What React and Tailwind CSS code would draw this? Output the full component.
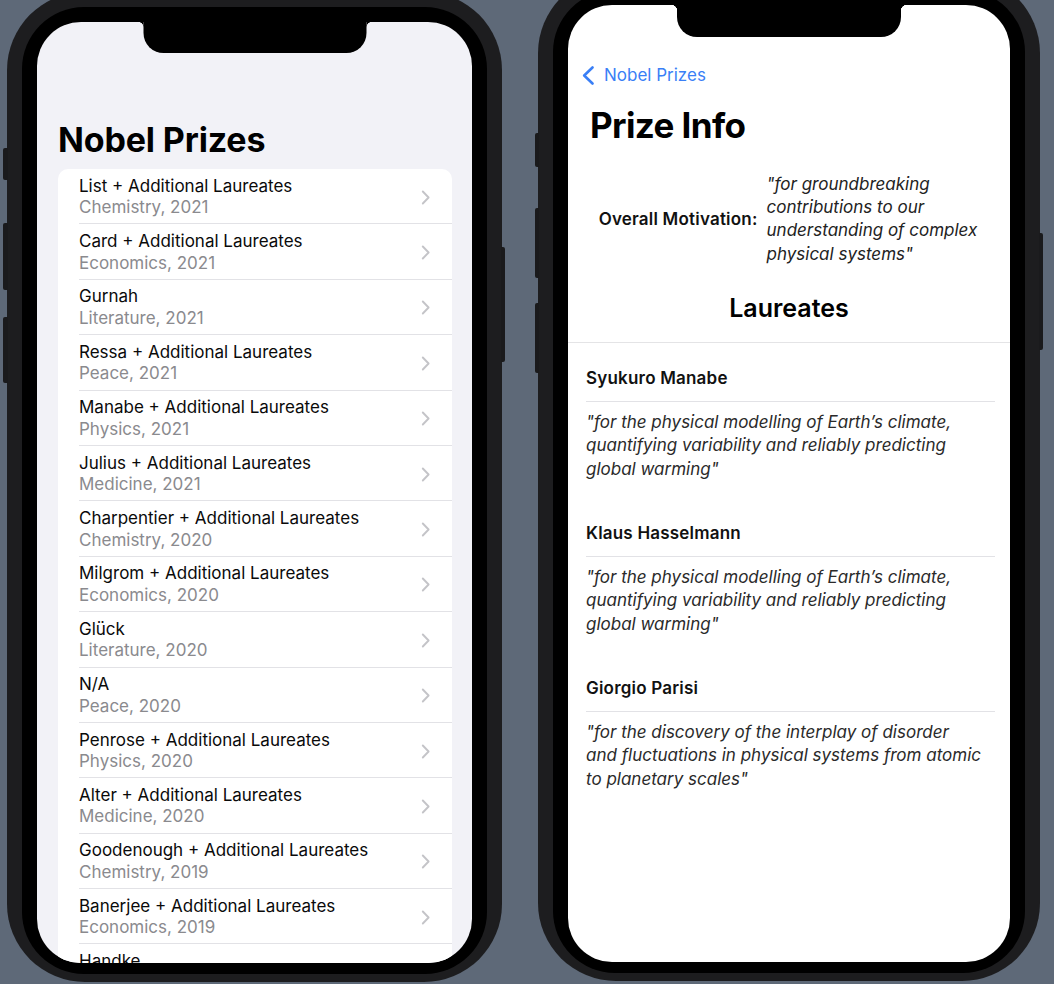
import React from "react";

const rows = [
  ["List + Additional Laureates", "Chemistry, 2021"],
  ["Card + Additional Laureates", "Economics, 2021"],
  ["Gurnah", "Literature, 2021"],
  ["Ressa + Additional Laureates", "Peace, 2021"],
  ["Manabe + Additional Laureates", "Physics, 2021"],
  ["Julius + Additional Laureates", "Medicine, 2021"],
  ["Charpentier + Additional Laureates", "Chemistry, 2020"],
  ["Milgrom + Additional Laureates", "Economics, 2020"],
  ["Glück", "Literature, 2020"],
  ["N/A", "Peace, 2020"],
  ["Penrose + Additional Laureates", "Physics, 2020"],
  ["Alter + Additional Laureates", "Medicine, 2020"],
  ["Goodenough + Additional Laureates", "Chemistry, 2019"],
  ["Banerjee + Additional Laureates", "Economics, 2019"],
  ["Handke", "Literature, 2019"],
];

const laureates = [
  {
    name: "Syukuro Manabe",
    lines: [
      "\"for the physical modelling of Earth’s climate,",
      "quantifying variability and reliably predicting",
      "global warming\"",
    ],
  },
  {
    name: "Klaus Hasselmann",
    lines: [
      "\"for the physical modelling of Earth’s climate,",
      "quantifying variability and reliably predicting",
      "global warming\"",
    ],
  },
  {
    name: "Giorgio Parisi",
    lines: [
      "\"for the discovery of the interplay of disorder",
      "and fluctuations in physical systems from atomic",
      "to planetary scales\"",
    ],
  },
];

function Chevron() {
  return (
    <svg width="9" height="15" viewBox="0 0 9 15" fill="none" className="shrink-0">
      <path d="M1.8 1.5L7.6 7.5L1.8 13.5" stroke="#c4c4c8" strokeWidth="1.9" strokeLinecap="round" strokeLinejoin="round" />
    </svg>
  );
}

function BackChevron() {
  return (
    <svg width="12" height="19" viewBox="0 0 12 19" fill="none" className="shrink-0">
      <path d="M10.5 1.5L2.2 9.5L10.5 17.5" stroke="#3a7ff6" strokeWidth="2.6" strokeLinecap="round" strokeLinejoin="round" />
    </svg>
  );
}

function Notch({ w, h }) {
  return (
    <div className="absolute left-1/2 top-0 z-10 -translate-x-1/2">
      <div className="relative bg-black rounded-b-[20px]" style={{ width: w, height: h }}>
        <div className="absolute left-[-6px] top-0 h-[6px] w-[6px] bg-[radial-gradient(circle_at_0_100%,transparent_6px,#000_6.5px)]" />
        <div className="absolute right-[-6px] top-0 h-[6px] w-[6px] bg-[radial-gradient(circle_at_100%_100%,transparent_6px,#000_6.5px)]" />
      </div>
    </div>
  );
}

function Frame({ children }) {
  return (
    <div className="h-full rounded-[78px] bg-[#1d1d1f] px-[15px] pt-[15px] pb-[8px]">
      <div className="h-full rounded-[62px] bg-black px-[15px] pt-[15px] pb-[11px]">
        {children}
      </div>
    </div>
  );
}

function LeftScreen() {
  return (
    <div className="relative h-full overflow-hidden rounded-[44px] bg-[#f2f2f7]">
      <Notch w={223} h={31} />
      <div className="pt-[97px]">
        <h1 className="px-[21px] text-[34px] font-bold leading-[41px] tracking-[-0.15px] text-black">Nobel Prizes</h1>
        <div className="ml-[21px] mr-[20px] mt-[9px] rounded-[10px] bg-white">
          {rows.map(([t, s], i) => (
            <div key={i} className="flex h-[55.4px] pl-[21px]">
              <div className="flex flex-1 items-center border-b border-[#e2e2e6] pr-[22px] pt-[2px]">
                <div className="flex-1">
                  <div className="text-[17px] leading-[21.6px] tracking-[0px] text-[#0a0a0a]">{t}</div>
                  <div className="text-[17px] leading-[21.6px] tracking-[0px] text-[#8a8a8e]">{s}</div>
                </div>
                <Chevron />
              </div>
            </div>
          ))}
        </div>
      </div>
    </div>
  );
}

function RightScreen() {
  return (
    <div className="relative h-full overflow-hidden rounded-[44px] bg-white">
      <Notch w={224} h={32} />
      <div className="pt-[58px]">
        <div className="flex h-[24px] items-center pl-[14px] text-[#3a7ff6]">
          <BackChevron />
          <span className="ml-[10px] text-[17px] leading-[24px] tracking-[0px]">Nobel Prizes</span>
        </div>
        <h1 className="mt-[17px] px-[22px] text-[35px] font-bold leading-[42px] tracking-[-0.6px] text-black">Prize Info</h1>
        <div className="mt-[26.5px] flex items-center justify-center gap-[9px] pr-[2px]">
          <div className="text-[17px] font-semibold leading-[22px] tracking-[0.2px] text-[#111]">Overall Motivation:</div>
          <div className="text-[17px] italic leading-[23.4px] tracking-[0px] text-[#222]">
            <div>"for groundbreaking</div>
            <div>contributions to our</div>
            <div>understanding of complex</div>
            <div>physical systems"</div>
          </div>
        </div>
        <div className="mt-[26.5px] text-center text-[25px] font-semibold leading-[30px] tracking-[0px] text-black">Laureates</div>
        <div className="mt-[19px] border-t border-[#e4e4e6]" />
        <div className="pt-[24px]">
          {laureates.map((l, i) => (
            <div key={i} className="mb-[40.25px] pl-[18px] pr-[15px]">
              <div className="border-b border-[#e2e2e6] pb-[12px] text-[17px] font-semibold leading-[22px] tracking-[0.2px] text-[#111]">{l.name}</div>
              <div className="pt-[9.25px] text-[17px] italic leading-[23.5px] tracking-[0px] text-[#2a2a2a]">
                {l.lines.map((ln, j) => (
                  <div key={j}>{ln}</div>
                ))}
              </div>
            </div>
          ))}
        </div>
      </div>
    </div>
  );
}

export default function App() {
  return (
    <div className="relative flex h-[984px] w-[1054px] items-start gap-[36px] overflow-hidden bg-[#5e6978] pl-[7px] font-['Inter','Liberation_Sans',sans-serif]">
      <div className="relative mt-[-8px] h-[990px] w-[495px] shrink-0">
        <div className="absolute left-[-4px] top-[156px] h-[32px] w-[5px] rounded-l-[2px] bg-[#1a1a1c]" />
        <div className="absolute left-[-4px] top-[231px] h-[67px] w-[5px] rounded-l-[2px] bg-[#1a1a1c]" />
        <div className="absolute left-[-4px] top-[325px] h-[66px] w-[5px] rounded-l-[2px] bg-[#1a1a1c]" />
        <div className="absolute right-[-3px] top-[255px] h-[115px] w-[4px] rounded-r-[2px] bg-[#1a1a1c]" />
        <Frame>
          <LeftScreen />
        </Frame>
      </div>
      <div className="relative mt-[-25px] h-[1006px] w-[502px] shrink-0">
        <div className="absolute left-[-3px] top-[158px] h-[34px] w-[4px] rounded-l-[2px] bg-[#1a1a1c]" />
        <div className="absolute left-[-3px] top-[233px] h-[70px] w-[4px] rounded-l-[2px] bg-[#1a1a1c]" />
        <div className="absolute left-[-3px] top-[328px] h-[70px] w-[4px] rounded-l-[2px] bg-[#1a1a1c]" />
        <div className="absolute right-[-3px] top-[258px] h-[117px] w-[4px] rounded-r-[2px] bg-[#1a1a1c]" />
        <Frame>
          <RightScreen />
        </Frame>
      </div>
    </div>
  );
}
